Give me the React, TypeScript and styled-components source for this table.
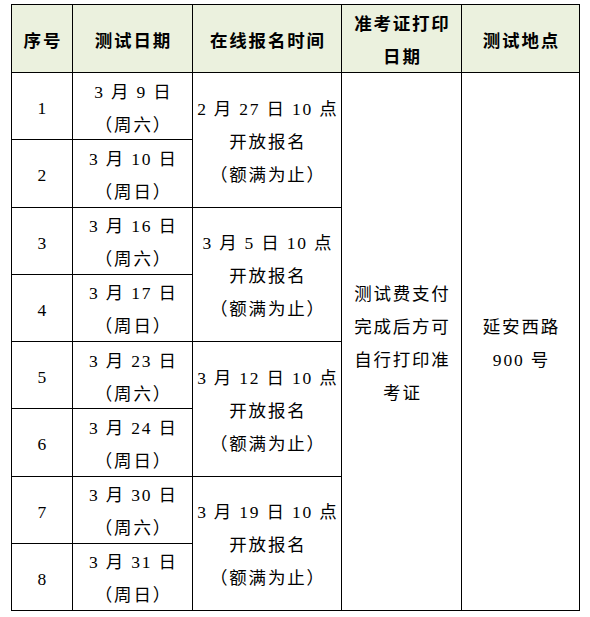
import React from "react";
import styled, { createGlobalStyle } from "styled-components";

const Global = createGlobalStyle`
  html, body { margin: 0; padding: 0; background: #fff; }
  body { font-family: "Liberation Serif", "Noto Sans CJK SC", serif; color: #000; }
`;

const Page = styled.div`
  padding: 4px 0 0 11px;
`;

const Table = styled.div`
  display: inline-grid;
  grid-template-columns: 60px 119px 148px 119px 117px;
  grid-template-rows: 67px repeat(8, 66.25px);
  gap: 1px;
  padding: 1px;
  background: #000;
`;

const Cell = styled.div<{ $rows?: number; $head?: boolean }>`
  grid-row: span ${(p) => p.$rows ?? 1};
  background: ${(p) => (p.$head ? "#EBF1DE" : "#fff")};
  display: flex;
  flex-direction: column;
  align-items: center;
  justify-content: center;
  text-align: center;
  font-size: 17.5px;
  font-weight: ${(p) => (p.$head ? 700 : 400)};
  line-height: 33px;
  letter-spacing: 1.8px;
  padding: 5px 0 0 1.8px;
  box-sizing: border-box;
  white-space: nowrap;
`;

const Line = styled.span`
  display: block;
`;

type Session = {
  seq: number;
  date: string;
  week: string;
};

const sessions: Session[] = [
  { seq: 1, date: "3 月 9 日", week: "（周六）" },
  { seq: 2, date: "3 月 10 日", week: "（周日）" },
  { seq: 3, date: "3 月 16 日", week: "（周六）" },
  { seq: 4, date: "3 月 17 日", week: "（周日）" },
  { seq: 5, date: "3 月 23 日", week: "（周六）" },
  { seq: 6, date: "3 月 24 日", week: "（周日）" },
  { seq: 7, date: "3 月 30 日", week: "（周六）" },
  { seq: 8, date: "3 月 31 日", week: "（周日）" },
];

const regTimes = ["2 月 27 日 10 点", "3 月 5 日 10 点", "3 月 12 日 10 点", "3 月 19 日 10 点"];

export default function App() {
  const cells: React.ReactNode[] = [];
  sessions.forEach((s, i) => {
    cells.push(<Cell key={`seq${i}`}>{s.seq}</Cell>);
    cells.push(
      <Cell key={`date${i}`}>
        <Line>{s.date}</Line>
        <Line>{s.week}</Line>
      </Cell>
    );
    if (i % 2 === 0) {
      cells.push(
        <Cell key={`reg${i}`} $rows={2}>
          <Line>{regTimes[i / 2]}</Line>
          <Line>开放报名</Line>
          <Line>（额满为止）</Line>
        </Cell>
      );
    }
    if (i === 0) {
      cells.push(
        <Cell key="print" $rows={8}>
          <Line>测试费支付</Line>
          <Line>完成后方可</Line>
          <Line>自行打印准</Line>
          <Line>考证</Line>
        </Cell>
      );
      cells.push(
        <Cell key="place" $rows={8}>
          <Line>延安西路</Line>
          <Line>900 号</Line>
        </Cell>
      );
    }
  });

  return (
    <>
      <Global />
      <Page>
        <Table>
          <Cell $head>序号</Cell>
          <Cell $head>测试日期</Cell>
          <Cell $head>在线报名时间</Cell>
          <Cell $head>
            <Line>准考证打印</Line>
            <Line>日期</Line>
          </Cell>
          <Cell $head>测试地点</Cell>
          {cells}
        </Table>
      </Page>
    </>
  );
}
